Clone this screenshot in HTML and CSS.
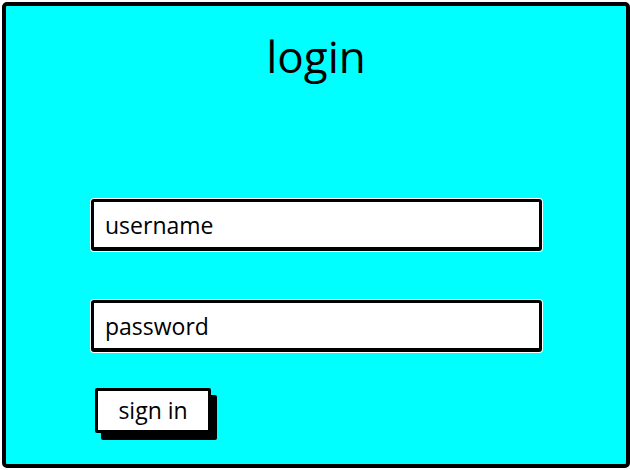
FILE: index.html
```html
<!DOCTYPE html>
<html lang="en">
<head>
    <meta charset="UTF-8">
    <meta name="viewport" content="width=device-width, initial-scale=1.0">
    <title>login</title>
    <link rel="stylesheet" href="styles.css">
</head>
<body>
    <div class="card">
        <h1>login</h1>
        <form class="form">
            <div class="field">username</div>
            <div class="field">password</div>
            <button type="button" class="btn">sign in</button>
        </form>
    </div>
</body>
</html>
```

FILE: styles.css
```css
body {
    margin: 0;
    font-family: 'Open Sans', sans-serif;
    color: #000;
    background: #fff;
}
.card {
    box-sizing: border-box;
    width: 628px;
    height: 466px;
    margin: 2px 0 0 2px;
    border: 4px solid #000;
    border-radius: 5px;
    background: #00ffff;
}
h1 {
    margin: 20px 0 0;
    text-align: center;
    font-size: 44px;
    font-weight: 500;
    line-height: 60px;
}
.form {
    display: flex;
    flex-direction: column;
    align-items: flex-start;
    margin: 113px 0 0 85px;
}
.field {
    box-sizing: border-box;
    display: flex;
    align-items: center;
    width: 451px;
    height: 52px;
    padding-left: 11px;
    border: 3px solid #000;
    border-bottom-width: 4px;
    border-radius: 3px;
    background: #fff;
    box-shadow: 0 0 0 1px #fff;
    font-size: 23px;
    font-weight: 500;
}
.field + .field {
    margin-top: 49px;
}
.btn {
    box-sizing: border-box;
    width: 116px;
    height: 45px;
    margin: 36px 0 0 4px;
    padding: 0 0 2px;
    border: 3px solid #000;
    border-radius: 2px;
    background: #fff;
    box-shadow: 6px 7px 0 #000;
    font-family: inherit;
    font-size: 23px;
    font-weight: 500;
    color: #000;
}
```
